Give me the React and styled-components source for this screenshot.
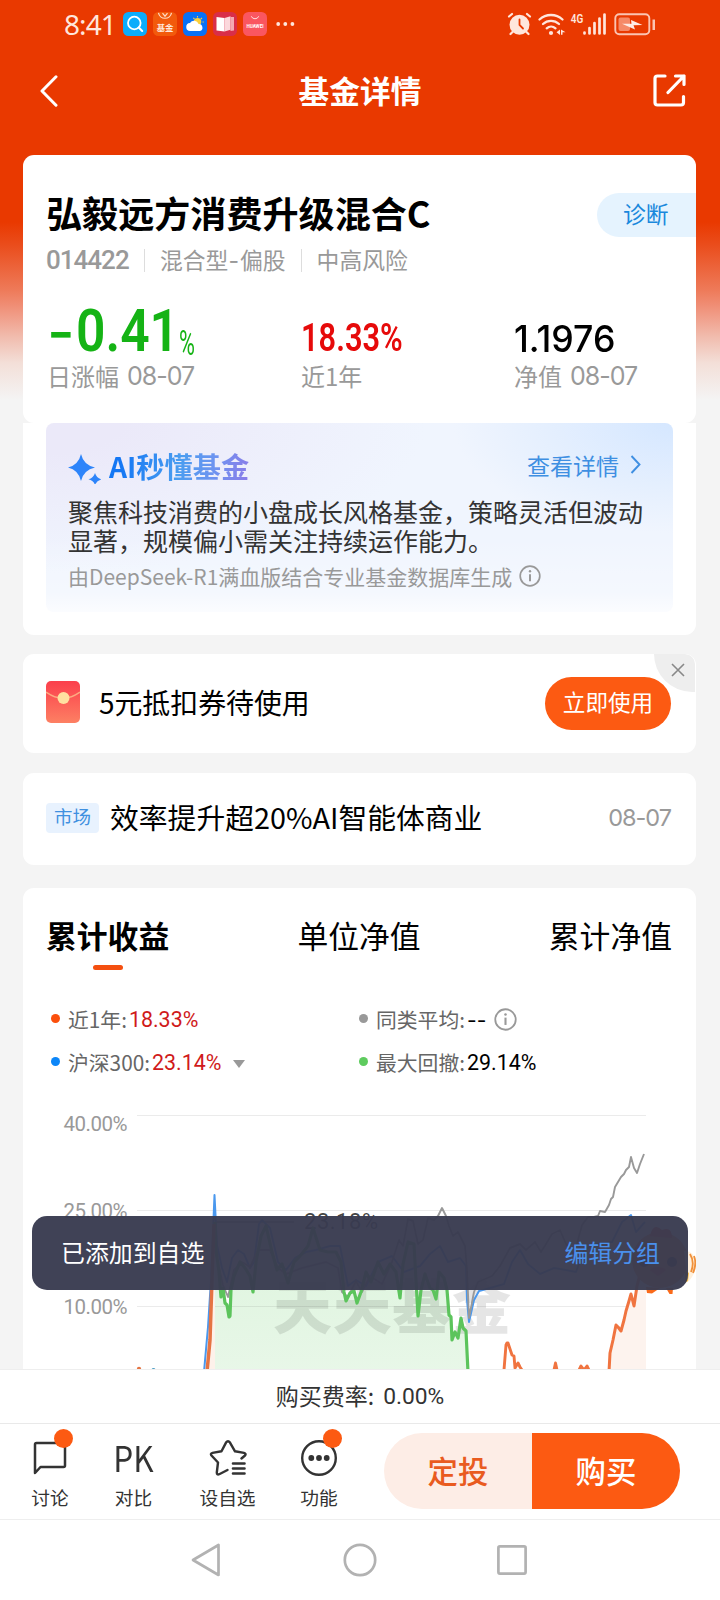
import React from 'react'
import styled, { createGlobalStyle } from 'styled-components';

const GlobalStyle = createGlobalStyle`
  *{
    box-sizing: border-box;
  }
  body{
    margin: 0;
    background-color: #f4f4f4;
    font-family: 'Noto Sans CJK SC', 'Noto Sans', sans-serif;
    color: #000;
  }
  svg{
    display: block;
    flex-shrink: 0;
  }
`

const Screen = styled.div`
  position: relative;
  width: 720px;
  height: 1600px;
  overflow: hidden;
  display: flex;
  flex-direction: column;
  white-space: nowrap;
  background: linear-gradient(
    to bottom,
    #e93900 0, #e93900 222px, #ea4d1c 245px, #ee7a59 290px,
    #f09078 307px, #f1bcae 337px, #f3dfd8 363px, #f4f4f4 400px
  );
`

// digits are drawn narrower than the font's own width
const Num = styled.span`
  display: inline-block;
  font-family: ${p => p.$font || 'Roboto'}, sans-serif;
  font-size: ${p => p.$size}px;
  font-weight: ${p => p.$weight || 400};
  line-height: 1;
  letter-spacing: ${p => p.$ls || 0}px;
  color: ${p => p.$color || 'inherit'};
  width: ${p => (p.$w ? p.$w + 'px' : 'auto')};
  transform: scaleX(${p => p.$sx || 1});
  transform-origin: ${p => p.$origin || 'left'} center;
`

/* ---------- top ---------- */

const StatusBar = styled.div`
  height: 48px;
  padding: 0 64px 0 64px;
  display: flex;
  align-items: center;
  justify-content: space-between;
  color: #ffe6dc;
  .side{
    display: flex;
    align-items: center;
  }
  .apps{
    display: flex;
    gap: 6px;
    margin-left: 9px;
  }
`

const Clock = styled.div`
  width: 50px;
  font-family: 'Noto Sans', sans-serif;
  font-size: 28px;
  line-height: 48px;
  letter-spacing: -0.9px;
`

const Header = styled.div`
  height: 107px;
  padding: 0 34px 22px 40px;
  display: flex;
  align-items: center;
  justify-content: space-between;
  color: #fff;
  h1{
    margin: 0 0 2px 9px;
    font-size: 30.7px;
    line-height: 40px;
    font-weight: 700;
  }
`

const Content = styled.div`
  flex: 1;
  min-height: 0;
  padding: 0 24px 0 23px;
  overflow: hidden;
`

const Card = styled.div`
  background-color: #fff;
  border-radius: ${p => p.$radius || '11px'};
  height: ${p => p.$h}px;
  margin-top: ${p => p.$mt || 0}px;
`

/* ---------- fund summary ---------- */

const NameRow = styled.div`
  padding: 38px 0 0 23px;
  display: flex;
  justify-content: space-between;
  h2{
    margin: 0;
    font-size: 36.1px;
    line-height: 38px;
    font-weight: 700;
  }
`

const Diagnose = styled.div`
  width: 99px;
  height: 44px;
  border-radius: 22px 0 0 22px;
  background-color: #e5f3fe;
  color: #1a88dc;
  font-size: 22.8px;
  line-height: 41px;
  padding-left: 26px;
`

const Meta = styled.div`
  display: flex;
  align-items: center;
  height: 28px;
  margin-top: 9px;
  padding-left: 23px;
  color: #999;
  font-size: 22.8px;
  line-height: 28px;
  span.item{
    padding-left: 16px;
    margin-left: 16px;
    position: relative;
    &:before{
      content: '';
      position: absolute;
      left: 0;
      top: 3px;
      width: 1px;
      height: 23px;
      background-color: #ddd;
    }
  }
  span.item + span.item{
    margin-left: 15px;
  }
`

const Stats = styled.div`
  display: grid;
  grid-template-columns: 254px 213px 1fr;
  padding-left: 24px;
  margin-top: 23px;
`

const StatValue = styled.div`
  height: 64px;
  display: flex;
  align-items: flex-end;
  padding-bottom: ${p => p.$lift || 0}px;
  color: ${p => p.$color};
`

const StatLabel = styled.div`
  display: flex;
  align-items: center;
  gap: 8px;
  font-size: 24px;
  line-height: 30px;
  color: #999;
`

/* ---------- AI panel ---------- */

const AiPanel = styled.div`
  height: 189px;
  margin: 0 23px;
  border-radius: 8px;
  padding: 25px 23px 0 22px;
  background:
    linear-gradient(to bottom, rgba(255,255,255,0) 60%, rgba(255,255,255,.3) 90%, rgba(255,255,255,.75) 100%),
    radial-gradient(ellipse 220px 110px at 100% 0, #d5e7ff 0, rgba(225,238,255,0) 100%),
    radial-gradient(ellipse 380px 150px at 0 0, #ebe9f9 20%, rgba(240,240,252,0) 100%),
    #f0f5fe;
`

const AiHead = styled.div`
  display: flex;
  align-items: center;
  height: 38px;
  .title{
    font-size: 28.2px;
    line-height: 36px;
    font-weight: 700;
    margin: 0 0 2px 8px;
    background: linear-gradient(100deg, #1477f4 10%, #4a9df0 50%, #6f93f0 75%, #8b7be8 100%);
    -webkit-background-clip: text;
    color: transparent;
  }
  .more{
    margin-left: auto;
    display: flex;
    align-items: center;
    gap: 11px;
    font-size: 23px;
    line-height: 32px;
    color: #3f8fe2;
    padding: 0 9px 5px 0;
  }
`

const AiText = styled.p`
  margin: 11px 0 0;
  font-size: 25px;
  line-height: 29px;
  color: #333;
`

const AiSource = styled.div`
  display: flex;
  align-items: center;
  gap: 7px;
  margin-top: 7px;
  font-size: 21px;
  line-height: 28px;
  color: #999;
`

/* ---------- coupon and news ---------- */

const Row = styled(Card)`
  position: relative;
  overflow: hidden;
  display: flex;
  align-items: center;
  padding: 0 25px 3px 23px;
`

const CouponText = styled.div`
  flex: 1;
  margin-left: 19px;
  font-size: 27.9px;
  line-height: 40px;
`

const UseButton = styled.div`
  width: 126px;
  height: 53px;
  margin-top: 3px;
  border-radius: 27px;
  background-color: #fc5a12;
  color: #fff;
  font-size: 22.6px;
  line-height: 50px;
  text-align: center;
`

const CloseCorner = styled.div`
  position: absolute;
  right: 1px;
  top: 0;
  width: 41px;
  height: 38px;
  border-radius: 0 10px 0 38px;
  background-color: #eee;
  svg{
    margin: 9px 0 0 17px;
  }
`

const Tag = styled.div`
  width: 53px;
  height: 30px;
  border-radius: 4px;
  background-color: #e8f2fe;
  color: #3f90e0;
  font-size: 18.5px;
  line-height: 27px;
  text-align: center;
`

const NewsTitle = styled.div`
  flex: 1;
  margin: 0 0 2px 11px;
  font-size: 28.8px;
  line-height: 40px;
`

/* ---------- chart card ---------- */

const Tabs = styled.div`
  display: flex;
  justify-content: space-between;
  padding: 26px 24px 0 23px;
`

const Tab = styled.div`
  font-size: 30.8px;
  line-height: 42px;
  font-weight: ${p => (p.$active ? 700 : 400)};
  &:after{
    content: '';
    display: block;
    width: 30px;
    height: 5px;
    margin: 9px auto 0;
    border-radius: 3px;
    background-color: ${p => (p.$active ? '#f44f10' : 'transparent')};
  }
`

const Legend = styled.div`
  display: grid;
  grid-template-columns: 308px 1fr;
  padding: 28px 0 0 28px;
  grid-auto-rows: 43px;
  height: 113px;
`

const LegendItem = styled.div`
  display: flex;
  align-items: center;
  font-size: 20.8px;
  line-height: 43px;
  color: #666;
  &:before{
    content: '';
    width: 9px;
    height: 9px;
    border-radius: 50%;
    margin: 0 8px 2px 0;
    background-color: ${p => p.$dot};
  }
  ${Num}{
    margin: 1px 0 0 2px;
  }
  .info{
    margin-left: 8px;
  }
  .caret{
    margin: 3px 0 0 12px;
  }
`

/* ---------- bottom ---------- */

const FeeBar = styled.div`
  height: 54px;
  border-top: 1px solid #eee;
  background-color: #fff;
  color: #333;
  font-size: 23px;
  display: flex;
  align-items: center;
  justify-content: center;
  gap: 9px;
  line-height: 48px;
  padding-bottom: 3px;
  ${Num}{
    margin-top: 4px;
  }
`

const ActionBar = styled.div`
  height: 96px;
  border-top: 1px solid #e9e9e9;
  background-color: #fff;
  display: flex;
  padding-left: 12px;
`

const Action = styled.div`
  position: relative;
  width: ${p => p.$w}px;
  display: flex;
  flex-direction: column;
  align-items: center;
  color: #333;
  .icon{
    height: 36px;
    margin-top: 16px;
    display: flex;
    align-items: center;
  }
  .icon.text{
    padding-bottom: 4px;
  }
  .label{
    font-size: 18.7px;
    line-height: 28px;
    margin-top: 7px;
  }
`

const RedDot = styled.i`
  position: absolute;
  top: 5px;
  left: ${p => p.$left}px;
  width: 19px;
  height: 19px;
  border-radius: 50%;
  background-color: #fc5a12;
`

const BuyGroup = styled.div`
  display: flex;
  height: 76px;
  margin: 9px 0 0 auto;
  padding-right: 40px;
`

const BuyButton = styled.div`
  width: 148px;
  height: 76px;
  font-size: 30.4px;
  line-height: 74px;
  font-weight: 500;
  text-align: center;
  color: ${p => (p.$main ? '#fff' : '#e95b1f')};
  background-color: ${p => (p.$main ? '#fc5a12' : '#fdede6')};
  border-radius: ${p => (p.$main ? '0 38px 38px 0' : '38px 0 0 38px')};
`

const NavBar = styled.div`
  height: 81px;
  border-top: 1px solid #eee;
  background-color: #fff;
  display: flex;
  align-items: center;
  justify-content: space-between;
  padding: 0 193px 0 191px;
  .home{
    margin-left: 2px;
  }
`

const Toast = styled.div`
  position: absolute;
  left: 32px;
  top: 1216px;
  width: 656px;
  height: 74px;
  border-radius: 15px;
  background-color: rgba(57, 59, 80, .965);
  display: flex;
  justify-content: space-between;
  padding: 0 28px 0 29px;
  font-size: 23.9px;
  line-height: 71px;
  color: #fff;
  span{
    color: #4a90ec;
  }
`

const Info = ({ size }) => (
  <svg className="info" width={size} height={size} viewBox="0 0 22 22" fill="none" stroke="#999" strokeWidth="1.7">
    <circle cx="11" cy="11" r="9.8" />
    <path d="M11 9.2v7" strokeWidth="2" />
    <circle cx="11" cy="6.3" r="1.2" fill="#999" stroke="none" />
  </svg>
)

const AppIcons = () => (
  <div className="apps">
    <svg width="24" height="24" fill="none">
      <rect width="24" height="24" rx="5.5" fill="#0cacfb" />
      <circle cx="11.3" cy="11" r="6.3" stroke="#fff" strokeWidth="1.8" />
      <path d="M15.8 15.6l3.4 3.4" stroke="#fff" strokeWidth="2.1" strokeLinecap="round" />
    </svg>
    <svg width="24" height="24" fill="none">
      <rect width="24" height="24" rx="5.5" fill="#f25a0c" />
      <path d="M5.5 0.8a6.6 6.6 0 0 0 13 0" stroke="#ffdcc8" strokeWidth="1.2" />
      <path d="M9.5 1.2l2.5 3 2.5-3" stroke="#ffdcc8" strokeWidth="1.2" />
      <text x="12" y="18.6" fontSize="8.4" fontWeight="700" fill="#ffe9dc" textAnchor="middle">基金</text>
    </svg>
    <svg width="24" height="24">
      <rect width="24" height="24" rx="5.5" fill="#0871f6" />
      <path d="M14.5 4v1.6M19 5.8l-1.2 1.2M20.8 10h-1.3M10.3 5.8l1.2 1.2" stroke="#f7c948" strokeWidth="1.1" />
      <circle cx="14.6" cy="9.8" r="3.7" fill="#fbcf3b" />
      <path d="M7.5 19a4 4 0 0 1-.5-8 4.8 4.8 0 0 1 8.6 1 3.6 3.6 0 0 1 1.4 7z" fill="#fff" />
    </svg>
    <svg width="24" height="24">
      <rect width="24" height="24" rx="5.5" fill="#d92e48" />
      <path d="M3.5 5l8 1v13.5l-8-1z" fill="#fff" />
      <path d="M11.5 6l6-1.8v13.5l-6 1.8z" fill="#fbd8dc" />
      <path d="M17.5 5h3.5v13.5l-3.5 .5z" fill="#f4a9b2" />
    </svg>
    <svg width="24" height="24" fill="none">
      <rect width="24" height="24" rx="5.5" fill="#fa5660" />
      <path d="M8.3 4.3a4 4 0 0 0 7.4 0" stroke="#ffe0e0" strokeWidth="1" />
      <text x="12" y="15.8" fontSize="4.6" fontWeight="700" fill="#fff" textAnchor="middle" fontFamily="Roboto">HUAWEI</text>
    </svg>
    <svg width="24" height="24" fill="#ffe6dc">
      <circle cx="5.2" cy="12" r="1.9" />
      <circle cx="12.3" cy="12" r="1.9" />
      <circle cx="19.4" cy="12" r="1.9" />
    </svg>
  </div>
)

const SignalIcons = () => (
  <svg width="149" height="24" viewBox="507 12 149 24" fill="none" stroke="#ffe6dc">
    <circle cx="519.5" cy="24.8" r="10" fill="#ffe6dc" stroke="none" />
    <path d="M509 16.5l3-2.5M530 16.5l-3-2.5M512.5 32l-2 2M526.5 32l2 2" strokeWidth="2.2" strokeLinecap="round" />
    <path d="M519.5 19.5v5.5l3.5 3.5" stroke="#e93900" strokeWidth="1.8" strokeLinecap="round" />
    <path d="M539.5 19.5a17 17 0 0 1 23 0M543 24a12 12 0 0 1 16 0M546.7 28.3a6.6 6.6 0 0 1 8.8 0" strokeWidth="2.3" strokeLinecap="round" />
    <circle cx="551" cy="33" r="2.1" fill="#ffe6dc" stroke="none" />
    <path d="M556.5 32.3l3.5-2.8v5.5zM561 29.5l4.5 2.8h-3v2.5h-1.5z" fill="#ffe6dc" stroke="none" />
    <text x="570.8" y="22.8" fontSize="13" fontWeight="600" fontFamily="Roboto" fill="#ffe6dc" stroke="none" textLength="12.5" lengthAdjust="spacingAndGlyphs">4G</text>
    <path d="M584.5 32.5v1M589.5 28v5.5M594.5 23v10.5M599.5 18.5v15M604.5 14.5v19" strokeWidth="2.7" strokeLinecap="round" />
    <rect x="615.3" y="14.3" width="34" height="20" rx="4" strokeWidth="1.9" stroke="#fbc4b2" />
    <rect x="618.5" y="17.5" width="11.5" height="13.6" rx="2" fill="#f58a68" stroke="none" />
    <path d="M652.5 19.5h2.5v10.5h-2.5z" fill="#fbc4b2" stroke="none" />
    <path d="M622 23.800l9.5 0-.5-3.800 11.500 5-9 .3 1.500 4.200z" fill="#ffece5" stroke="none" />
  </svg>
)

/* chart points, "x,y" pairs in screen pixels */
const gray = `215,1250 223,1285 228,1297 234,1270 242,1262 250,1267 258,1250 270,1250 278,1268 286,1274
  302,1268 326,1262 338,1268 342,1292 348,1297 356,1281 362,1292 370,1276 382,1284 392,1262 399,1240
  403,1246 408,1219 413,1221 418,1244 423,1240 428,1218 434,1220 438,1216 442,1208 446,1216 449,1226
  453,1236 458,1232 465,1246 467,1270 469,1318 474,1292 478,1282 492,1276 500,1266 510,1248 520,1244
  526,1250 535,1242 541,1252 546,1244 552,1234 560,1230 566,1244 574,1254 578,1240 582,1225 588,1217
  594,1217 598,1216 600,1211 605,1212 609,1205 611,1199 613,1197 615,1187 621,1177 624,1174 626,1170
  629,1167 631,1157 634,1168 637,1173 640,1164 644,1154`
const green = `215,1222 216,1250 219,1272 221,1297 223,1288 225,1303 227,1305 229,1317 230,1316 231,1290
  234,1276 240,1262 245,1268 250,1276 253,1292 256,1262 261,1236 266,1226 272,1252 277,1270 282,1264
  288,1283 294,1262 300,1256 308,1246 313,1228 320,1250 328,1252 336,1252 341,1262 344,1292 346,1301
  350,1293 354,1291 357,1303 361,1292 366,1272 371,1282 378,1262 384,1274 390,1264 396,1272 400,1298
  403,1264 408,1242 414,1244 418,1316 421,1290 425,1274 430,1288 433,1290 436,1299 439,1272 444,1278
  447,1290 449,1315 451,1317 452,1340 455,1332 458,1338 461,1318 463,1328 466,1331 468,1372`
const blue = `204,1372 208,1327 211,1280 214.5,1195 217,1245 222,1268 227,1282 232,1258 238,1250 244,1254
  250,1268 254,1262 259,1224 262,1220 270,1228 278,1262 286,1270 295,1258 306,1252 316,1250 330,1246
  340,1246 348,1286 356,1280 366,1286 378,1262 392,1256 404,1272 420,1266 430,1254 440,1246 448,1262
  460,1258 466,1266 467,1300 469,1322 474,1300 479,1291 490,1288 504,1284 512,1262 520,1250 528,1264
  540,1274 554,1268 566,1270 576,1272 584,1250 596,1244 612,1242 622,1222 631,1215 636,1232 645,1222`
const fund = `609,1372 610,1353 613,1340 616,1325 618,1327 621,1331 624,1320 626,1311 629,1301 631,1294
  634,1306 637,1286 641,1270`

const Chart = () => (
  <svg width="673" height="289" viewBox="23 1083 673 289">
    <defs>
      <linearGradient id="fillGreen" x1="0" y1="0" x2="0" y2="1">
        <stop offset="0" stopColor="#dcf4dc" />
        <stop offset="1" stopColor="#e8f7e8" />
      </linearGradient>
    </defs>
    <path d="M137 1115.5h509M137 1210.5h509M137 1306.5h509" stroke="#ebebeb" />
    <g fontFamily="Roboto" fontSize="20.5" fill="#999">
      <text x="63.5" y="1130.5" textLength="64">40.00%</text>
      <text x="63.5" y="1217.5" textLength="64">25.00%</text>
      <text x="63.5" y="1313.5" textLength="64">10.00%</text>
    </g>
    <polygon points={green + ' 215,1372'} fill="url(#fillGreen)" />
    <polygon points={fund + ' 646,1270 646,1372'} fill="#fdf3ee" />
    <path d="M208 1372l4-60 3-60v120z" fill="#fdf1ea" />
    <path d="M215 1306.5h253" stroke="#000" strokeOpacity=".07" />
    <text x="273" y="1329" fontSize="59" fontWeight="900" fill="#000" fillOpacity=".1" textLength="238">天天基金</text>
    <path d="M215 1222h79" stroke="#555" />
    <text x="304" y="1229" fontFamily="Roboto" fontSize="22" fill="#444" textLength="74">23.18%</text>
    <g fill="none" strokeLinejoin="round">
      <polyline points={blue} stroke="#4a98ee" strokeWidth="2" />
      <polyline points={gray} stroke="#999" strokeWidth="1.9" />
      <polyline points={green} stroke="#5cc45c" strokeWidth="3.2" />
      <path d="M207 1372l3-32 2-60 2-56" stroke="#e57443" strokeWidth="3.5" />
      <path d="M504 1370l2-25 1-2h1l4 12 2 1 1 12 3-5 2 4 2 3M554 1370l1.5-7 1.5 7M579 1370l2-4 3 4 3-4 2 4" stroke="#f07440" strokeWidth="2.9" />
      <polyline points={fund} stroke="#f07440" strokeWidth="3" />
    </g>
    <circle cx="139" cy="1369" r="2.2" fill="#e57443" />
    <circle cx="153.5" cy="1370" r="2" fill="#4f9fc5" />
    <g>
      <circle cx="660" cy="1260" r="28" fill="#f7803c" />
      <path d="M650 1236q3-14 12-6 10-4 10 8z" fill="#ef3a1c" />
      <circle cx="644" cy="1262" r="5" fill="#3a2a20" />
      <circle cx="672" cy="1262" r="5" fill="#3a2a20" />
      <path d="M650 1270q8-6 16 0l-8 6z" fill="#ef3a1c" />
      <path d="M684 1251q10-1 11.5 11 0 14-8 20z" fill="#fff0dc" />
      <path d="M690 1254q5 8 1 18M694 1256q3 8-1 17" stroke="#f0903a" strokeWidth="1.8" fill="none" />
      <path d="M685 1270l4 3-1 8-3 2z" fill="#fbc04a" />
      <path d="M646 1287l14 1-8 5.5-5-.5zM666 1288h7l-.5 6-3 0z" fill="#fa6a1a" />
    </g>
  </svg>
)

function App() {
  return (
    <Screen>
      <GlobalStyle />
      <StatusBar>
        <div className="side">
          <Clock>8:41</Clock>
          <AppIcons />
        </div>
        <SignalIcons />
      </StatusBar>

      <Header>
        <svg width="18" height="32" fill="none" stroke="#fff" strokeWidth="3" strokeLinecap="round" strokeLinejoin="round">
          <path d="M16 1.8L2 16l14 14.2" />
        </svg>
        <h1>基金详情</h1>
        <svg width="33" height="33" fill="none" stroke="#fff" strokeWidth="3.2" strokeLinecap="round" strokeLinejoin="round">
          <path d="M12 2H4.5Q2 2 2 4.5v24Q2 31 4.5 31h23.5q2.5 0 2.5-2.5V22.5" />
          <path d="M22.5 2H31v8.5M31 2L15 18.5" />
        </svg>
      </Header>

      <Content>
        <Card $h={268}>
          <NameRow>
            <h2>弘毅远方消费升级混合C</h2>
            <Diagnose>诊断</Diagnose>
          </NameRow>
          <Meta>
            <Num $size={26} $weight={500} $ls={-1} $w={82}>014422</Num>
            <span className="item">混合型<Num $font="Inter" $size={23} $ls={1}>-</Num>偏股</span>
            <span className="item">中高风险</span>
          </Meta>
          <Stats>
            <div>
              <StatValue $color="#15b315">
                <Num $font="Inter" $size={60} $weight={500} $sx={1} $w={29}>-</Num>
                <Num $size={60} $weight={600} $sx={0.86} $w={103}>0.41</Num>
                <Num $size={35} $sx={0.62}>%</Num>
              </StatValue>
              <StatLabel>日涨幅<Num $font="Inter" $size={25} $ls={-1}>08-07</Num></StatLabel>
            </div>
            <div>
              <StatValue $color="#e60a0a" $lift={4}>
                <Num $size={38} $weight={600} $sx={0.81}>18.33%</Num>
              </StatValue>
              <StatLabel>近1年</StatLabel>
            </div>
            <div>
              <StatValue $color="#000" $lift={4}>
                <Num $font="Inter" $size={37} $weight={500} $sx={0.965}>1.1976</Num>
              </StatValue>
              <StatLabel>净值<Num $font="Inter" $size={25} $ls={-1}>08-07</Num></StatLabel>
            </div>
          </Stats>
        </Card>

        <Card $h={212} $radius="0 0 11px 11px">
          <AiPanel>
            <AiHead>
              <svg width="33" height="34" fill="#2d84fa">
                <path d="M13 4Q15.5 15 27 17.5 15.500 20 13 31 10.500 20 0 17.500 10.500 15 13 4z" />
                <path d="M27 23Q28.500 28 33.500 29.300 28.500 30.500 27 35 25.500 30.500 20.500 29.300 25.500 28 27 23z" />
              </svg>
              <div className="title">AI秒懂基金</div>
              <div className="more">
                查看详情
                <svg width="11" height="19" fill="none" stroke="#3f8fe2" strokeWidth="1.9">
                  <path d="M1.5 1l8 8.5-8 8.5" />
                </svg>
              </div>
            </AiHead>
            <AiText>聚焦科技消费的小盘成长风格基金，策略灵活但波动<br />显著，规模偏小需关注持续运作能力。</AiText>
            <AiSource>
              由DeepSeek-R1满血版结合专业基金数据库生成
              <Info size={22} />
            </AiSource>
          </AiPanel>
        </Card>

        <Row $h={99} $mt={19}>
          <svg width="34" height="42">
            <defs>
              <linearGradient id="envelope" x1="0" y1="0" x2="0" y2="1">
                <stop offset="0" stopColor="#fb3f4c" />
                <stop offset="1" stopColor="#fd8063" />
              </linearGradient>
            </defs>
            <rect width="34" height="42" rx="5" fill="url(#envelope)" />
            <path d="M0 11q17 12 34 0" fill="none" stroke="#fdaa80" strokeWidth="1.5" />
            <circle cx="17.5" cy="17" r="6" fill="#ffe0a0" />
          </svg>
          <CouponText>5元抵扣券待使用</CouponText>
          <UseButton>立即使用</UseButton>
          <CloseCorner>
            <svg width="14" height="14" stroke="#888" strokeWidth="1.6">
              <path d="M1 1l12 12M13 1L1 13" />
            </svg>
          </CloseCorner>
        </Row>

        <Row $h={92} $mt={20}>
          <Tag>市场</Tag>
          <NewsTitle>效率提升超20%AI智能体商业</NewsTitle>
          <Num $font="Inter" $size={23.5} $ls={-1} $color="#999">08-07</Num>
        </Row>

        <Card $h={520} $mt={23}>
          <Tabs>
            <Tab $active>累计收益</Tab>
            <Tab>单位净值</Tab>
            <Tab>累计净值</Tab>
          </Tabs>
          <Legend>
            <LegendItem $dot="#fb4f0c">近1年:<Num $size={21.4} $color="#d01a1a">18.33%</Num></LegendItem>
            <LegendItem $dot="#999">
              同类平均:<Num $font="Inter" $size={21} $color="#000">--</Num>
              <Info size={23} />
            </LegendItem>
            <LegendItem $dot="#0c86f8">
              沪深300:<Num $size={21.4} $color="#d01a1a">23.14%</Num>
              <svg className="caret" width="12" height="8"><path d="M0 0h12L6 8z" fill="#999" /></svg>
            </LegendItem>
            <LegendItem $dot="#5ecb5e">最大回撤:<Num $size={21.4} $color="#000">29.14%</Num></LegendItem>
          </Legend>
          <Chart />
        </Card>
      </Content>

      <FeeBar>
        <span>购买费率:</span>
        <Num $size={22.8}>0.00%</Num>
      </FeeBar>
      <ActionBar>
        <Action $w={76}>
          <div className="icon">
            <svg width="34" height="34" fill="none" stroke="#333" strokeWidth="2.5" strokeLinejoin="round">
              <path d="M2 32V3.5Q2 2 3.5 2H30.5Q32 2 32 3.5V24.5Q32 26 30.5 26H7.5z" />
            </svg>
          </div>
          <div className="label">讨论</div>
          <RedDot $left={42} />
        </Action>
        <Action $w={91}>
          <div className="icon text">
            <Num $font="'Noto Sans CJK SC'" $size={35} $sx={0.9} $origin="center">PK</Num>
          </div>
          <div className="label">对比</div>
        </Action>
        <Action $w={97}>
          <div className="icon">
            <svg width="38" height="37" fill="none" stroke="#333" strokeWidth="2.4" strokeLinejoin="round" strokeLinecap="round">
              <path d="M32.5 18.5l3.5-3q1.5-2-1-2.6l-9-1.6L21 2.6q-2-2.6-4 0l-4.5 8.7-9 1.6q-2.5.6-1 2.6l6.5 7-1.2 10q0 2.6 2.4 1.7l8.3-4.2" />
              <path d="M24 23.5h11.5M24 28.5h11.5M24 33.5h11.5" strokeWidth="2.6" />
            </svg>
          </div>
          <div className="label">设自选</div>
        </Action>
        <Action $w={86}>
          <div className="icon">
            <svg width="36" height="36" fill="none" stroke="#333" strokeWidth="2.4">
              <circle cx="18" cy="18" r="16.8" />
              <g fill="#333" stroke="none">
                <circle cx="10.3" cy="18" r="2.9" />
                <circle cx="18" cy="18" r="2.9" />
                <circle cx="25.7" cy="18" r="2.9" />
              </g>
            </svg>
          </div>
          <div className="label">功能</div>
          <RedDot $left={47} />
        </Action>
        <BuyGroup>
          <BuyButton>定投</BuyButton>
          <BuyButton $main>购买</BuyButton>
        </BuyGroup>
      </ActionBar>
      <NavBar>
        <svg width="30" height="34" fill="none" stroke="#b2b2b2" strokeWidth="2.7" strokeLinejoin="round">
          <path d="M27.5 2v30L2 17z" />
        </svg>
        <svg className="home" width="34" height="34" fill="none" stroke="#b2b2b2" strokeWidth="2.7">
          <circle cx="17" cy="17" r="15.2" />
        </svg>
        <svg width="30" height="30" fill="none" stroke="#b2b2b2" strokeWidth="2.7">
          <rect x="1.4" y="1.4" width="27.2" height="27.2" rx="1.5" />
        </svg>
      </NavBar>

      <Toast>
        已添加到自选
        <span>编辑分组</span>
      </Toast>
    </Screen>
  )
}

export default App
